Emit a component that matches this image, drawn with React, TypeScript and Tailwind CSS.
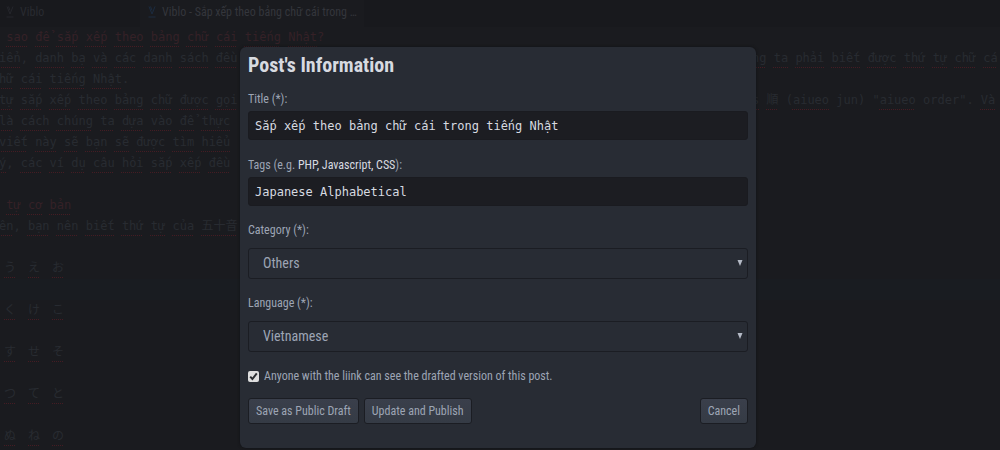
import React from "react";

type Line = { left?: string; right?: string; heading?: boolean; kana?: boolean; active?: boolean };

const lines: Line[] = [
  { left: " sao để sắp xếp theo bảng chữ cái tiếng Nhật?", heading: true },
  { left: "iển, danh bạ và các danh sách đều", right: "ng ta phải biết được thứ tự chữ cá" },
  { left: "hữ cái tiếng Nhật." },
  { left: "tự sắp xếp theo bảng chữ được gọi", right: "s 順 (aiueo jun) \"aiueo order\". Và" },
  { left: "là cách chúng ta dựa vào để thực" },
  { left: "viết này sẽ bạn sẽ được tìm hiểu" },
  { left: "ý, các ví dụ câu hỏi sắp xếp đều" },
  {},
  { left: " tự cơ bản", heading: true },
  { left: "ên, bạn nên biết thứ tự của 五十音" },
  {},
  { left: "う え お", kana: true },
  { active: true },
  { left: "く け こ", kana: true },
  {},
  { left: "す せ そ", kana: true },
  {},
  { left: "つ て と", kana: true },
  {},
  { left: "ぬ ね の", kana: true },
];

const correct = new Set(["jun", "order"]);

function Spelled({ text }: { text: string }) {
  return (
    <>
      {text.split(/([\p{L}]+)/u).map((part, i) =>
        i % 2 === 1 && !correct.has(part) ? (
          <span
            key={i}
            className="underline decoration-[#451c23] decoration-dotted decoration-1 underline-offset-[5px] [text-decoration-skip-ink:none]"
          >
            {part}
          </span>
        ) : (
          part
        ),
      )}
    </>
  );
}

function EditorLine({ line }: { line: Line }) {
  if (line.kana) {
    return (
      <div className="flex h-[21px] gap-3 pl-[5px]">
        {line.left!.split(" ").map((k) => (
          <Spelled key={k} text={k} />
        ))}
      </div>
    );
  }
  return (
    <div className={`flex h-[21px] whitespace-pre ${line.heading ? "text-[#352127]" : ""} ${line.active ? "bg-[#191c21]" : ""}`}>
      <span className="w-[753px] shrink-0">
        <Spelled text={line.left ?? ""} />
      </span>
      <span>
        <Spelled text={line.right ?? ""} />
      </span>
    </div>
  );
}

function VibloMark({ className }: { className: string }) {
  return (
    <svg viewBox="0 0 8 12" className={`h-3 w-2 shrink-0 ${className}`} fill="none" stroke="currentColor" aria-hidden="true">
      <path d="M1 0.5 L4 8 L7 0.5 M2.5 0.5 L4 4.5 M0.5 11 H7.5" />
    </svg>
  );
}

const label = "block text-[12px] leading-4";
const input =
  "block h-[29px] w-full rounded-[3px] border border-[#1a1b20] bg-[#1c1d22] px-1.5 font-['DejaVu_Sans_Mono',monospace] text-[12px] text-[#d7dae0] outline-none";
const select =
  "block h-[31px] w-full appearance-none rounded-[3px] border border-[#1b1d23] bg-[#282c34] px-3.5 text-[14px] text-[#9da5b4] outline-none";
const button =
  "h-[26px] rounded-[3px] border border-[#1b1d23] bg-linear-to-b from-[#3a3f4b] to-[#353b45] px-[7px] text-[12px] leading-4 whitespace-nowrap text-[#9da5b4]";

function SelectField({ id, text, value }: { id: string; text: string; value: string }) {
  return (
    <div>
      <label htmlFor={id} className={label}>
        {text}
      </label>
      <div className="relative mt-2.5">
        <select id={id} className={select} defaultValue={value}>
          <option>{value}</option>
        </select>
        <svg viewBox="0 0 6 6" className="pointer-events-none absolute top-3 right-[5px] size-1.5 text-[#b4bac5]" fill="currentColor" aria-hidden="true">
          <path d="M0.5 0 H5.5 L3 6 Z" />
        </svg>
      </div>
    </div>
  );
}

export default function App() {
  return (
    <div className="relative min-h-screen overflow-hidden bg-[#1a1b1f] font-['Roboto_Condensed','Roboto',sans-serif]">
      <div className="flex h-[27px] items-center bg-[#18191d] text-[12px] text-[#292b31]">
        <div className="flex w-[140px] items-center gap-1.5 pb-1 pl-1.5">
          <VibloMark className="text-[#25272d]" />
          Viblo
        </div>
        <div className="flex h-full w-[224px] items-center gap-1.5 bg-[#1a1b1f] pb-1 pl-2 whitespace-nowrap text-[#34363c]">
          <VibloMark className="text-[#1c2c40]" />
          Viblo - Sắp xếp theo bảng chữ cái trong …
        </div>
      </div>
      <div className="-ml-px font-['DejaVu_Sans_Mono','Noto_Sans_CJK_JP',monospace] text-[12px] leading-[21px] text-[#282b31]">
        {lines.map((line, i) => (
          <EditorLine key={i} line={line} />
        ))}
      </div>

      <div className="absolute inset-x-0 top-[47px] flex justify-center pr-1">
        <form
          role="dialog"
          aria-labelledby="heading"
          onSubmit={(e) => e.preventDefault()}
          className="w-full max-w-[516px] rounded-md bg-[#282c34] px-2 pt-1.5 pb-6 text-[#9da5b4] shadow-[0_0_3px_#101114]"
        >
          <h1 id="heading" className="text-[20px] leading-6 font-bold text-[#d7dae0]">
            Post's Information
          </h1>
          <div className="mt-3.5 flex flex-col gap-[17px]">
            <div>
              <label htmlFor="title" className={label}>
                Title (*):
              </label>
              <input id="title" className={`${input} mt-1`} defaultValue="Sắp xếp theo bảng chữ cái trong tiếng Nhật" />
            </div>
            <div>
              <label htmlFor="tags" className={label}>
                Tags (e.g. <span className="text-[#d7dae0]">PHP, Javascript, CSS</span>):
              </label>
              <input id="tags" className={`${input} mt-1`} defaultValue="Japanese Alphabetical" />
            </div>
          </div>
          <div className="mt-4 flex flex-col gap-4">
            <SelectField id="category" text="Category (*):" value="Others" />
            <SelectField id="language" text="Language (*):" value="Vietnamese" />
            <label className="flex items-center gap-[5px] text-[12px] leading-4">
              <span className="relative flex">
                <input
                  type="checkbox"
                  defaultChecked
                  className="peer size-[11px] shrink-0 appearance-none rounded-xs bg-[#dedede]"
                />
                <svg
                  viewBox="0 0 11 11"
                  className="pointer-events-none absolute inset-0 hidden size-[11px] text-[#2b2d31] peer-checked:block"
                  fill="none"
                  stroke="currentColor"
                  strokeWidth="2"
                  aria-hidden="true"
                >
                  <path d="M2.2 5.6 L4.4 8 L8.8 2.4" />
                </svg>
              </span>
              Anyone with the liink can see the drafted version of this post.
            </label>
          </div>
          <div className="mt-3.5 flex gap-[5px]">
            <button className={button}>Save as Public Draft</button>
            <button className={button}>Update and Publish</button>
            <button type="button" className={`${button} ml-auto`}>
              Cancel
            </button>
          </div>
        </form>
      </div>
    </div>
  );
}
